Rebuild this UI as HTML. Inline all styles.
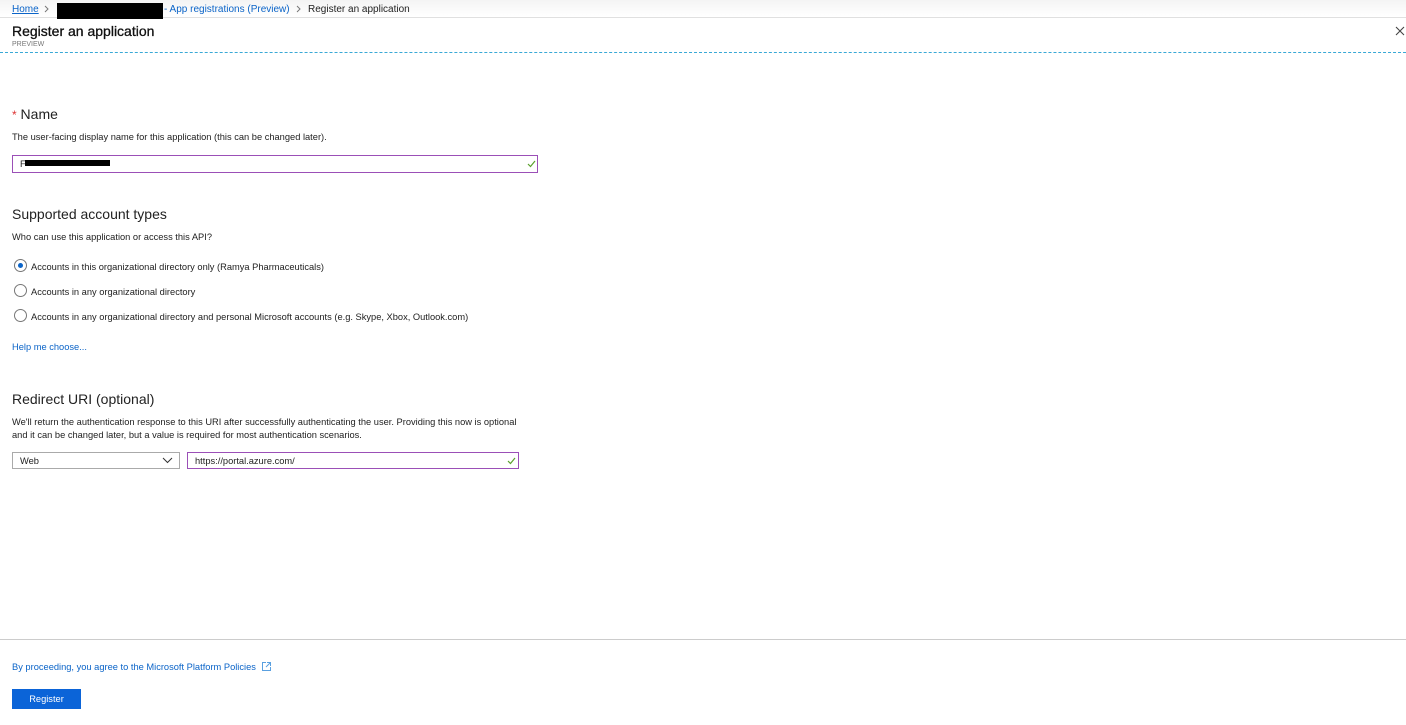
<!DOCTYPE html>
<html><head><meta charset="utf-8"><style>
*{margin:0;padding:0;box-sizing:border-box}
body{width:1406px;height:725px;background:#fff;font-family:"Liberation Sans",sans-serif;color:#222;position:relative;overflow:hidden}
.a{position:absolute;white-space:nowrap}
.s{font-size:9.3px}
.h{font-size:14px;color:#222}
.blue{color:#0b64c8}
.radio{position:absolute;width:13px;height:13px;border:1px solid #777;border-radius:50%;background:#fff}
.box{position:absolute;border:1px solid #9b4fb7;background:#fff}
</style></head><body>
<div class="a" style="left:0;top:0;width:1406px;height:18px;background:linear-gradient(#f4f4f4,#fff);border-bottom:1px solid #e0e0e0"></div>
<div class="a blue" style="left:12px;top:4px;text-decoration:underline;font-size:10px">Home</div>
<svg class="a" style="left:44px;top:5px" width="6" height="8"><path d="M1 1l3 3-3 3" stroke="#777" fill="none"/></svg>
<div class="a" style="left:57px;top:3px;width:106px;height:16px;background:#000"></div>
<div class="a blue" style="left:164px;top:4px;font-size:10px">- App registrations (Preview)</div>
<svg class="a" style="left:296px;top:5px" width="6" height="8"><path d="M1 1l3 3-3 3" stroke="#777" fill="none"/></svg>
<div class="a" style="left:308px;top:4px;font-size:10px">Register an application</div>
<div class="a" style="left:12px;top:23px;font-size:14px;color:#111;-webkit-text-stroke:0.3px #111">Register an application</div>
<div class="a" style="left:12px;top:41px;font-size:7px;color:#777">PREVIEW</div>
<div class="a" style="left:0;top:52px;width:1406px;border-top:1px dashed #3aa9d6"></div>
<svg class="a" style="left:1395px;top:26px" width="10" height="10"><path d="M1 1l8 8M9 1l-8 8" stroke="#444" stroke-width="1.1"/></svg>

<div class="a h" style="left:12px;top:106px"><span style="color:#d33;font-size:12px">*</span> Name</div>
<div class="a s" style="left:12px;top:132px">The user-facing display name for this application (this can be changed later).</div>
<div class="box" style="left:12px;top:155px;width:526px;height:18px"></div>
<div class="a s" style="left:20px;top:159px">F</div>
<div class="a" style="left:25px;top:160px;width:85px;height:6px;background:#000"></div>
<svg class="a" style="left:527px;top:160px" width="9" height="8"><path d="M1 4l2.5 2.5L8 1" stroke="#5aa02c" fill="none" stroke-width="1.2"/></svg>

<div class="a h" style="left:12px;top:206px">Supported account types</div>
<div class="a s" style="left:12px;top:232px">Who can use this application or access this API?</div>
<div class="radio" style="left:14px;top:259px"><div style="position:absolute;left:3px;top:3px;width:5px;height:5px;border-radius:50%;background:#0b64c8"></div></div>
<div class="a s" style="left:31px;top:262px">Accounts in this organizational directory only (Ramya Pharmaceuticals)</div>
<div class="radio" style="left:14px;top:284px"></div>
<div class="a s" style="left:31px;top:287px">Accounts in any organizational directory</div>
<div class="radio" style="left:14px;top:309px"></div>
<div class="a s" style="left:31px;top:312px">Accounts in any organizational directory and personal Microsoft accounts (e.g. Skype, Xbox, Outlook.com)</div>
<div class="a s blue" style="left:12px;top:342px">Help me choose...</div>

<div class="a h" style="left:12px;top:391px">Redirect URI (optional)</div>
<div class="a s" style="left:12px;top:417px">We'll return the authentication response to this URI after successfully authenticating the user. Providing this now is optional</div>
<div class="a s" style="left:12px;top:430px">and it can be changed later, but a value is required for most authentication scenarios.</div>
<div class="a" style="left:12px;top:452px;width:168px;height:17px;border:1px solid #aaa"></div>
<div class="a s" style="left:20px;top:456px">Web</div>
<svg class="a" style="left:162px;top:457px" width="11" height="7"><path d="M1 1l4.5 4.5L10 1" stroke="#333" fill="none"/></svg>
<div class="box" style="left:187px;top:452px;width:332px;height:17px"></div>
<div class="a s" style="left:195px;top:456px">https://portal.azure.com/</div>
<svg class="a" style="left:507px;top:457px" width="9" height="8"><path d="M1 4l2.5 2.5L8 1" stroke="#5aa02c" fill="none" stroke-width="1.2"/></svg>

<div class="a" style="left:0;top:639px;width:1406px;border-top:1px solid #ccc"></div>
<div class="a s blue" style="left:12px;top:662px">By proceeding, you agree to the Microsoft Platform Policies</div>
<svg class="a" style="left:261px;top:661px" width="11" height="11"><path d="M5 1.5H1.5v8h8V6M6 1.5h3.5V5M9.5 1.5L5 6" stroke="#5aa0e0" fill="none"/></svg>
<div class="a" style="left:12px;top:689px;width:69px;height:20px;background:#0b64d8;color:#fff;font-size:9.3px;text-align:center;line-height:20px">Register</div>
</body></html>
